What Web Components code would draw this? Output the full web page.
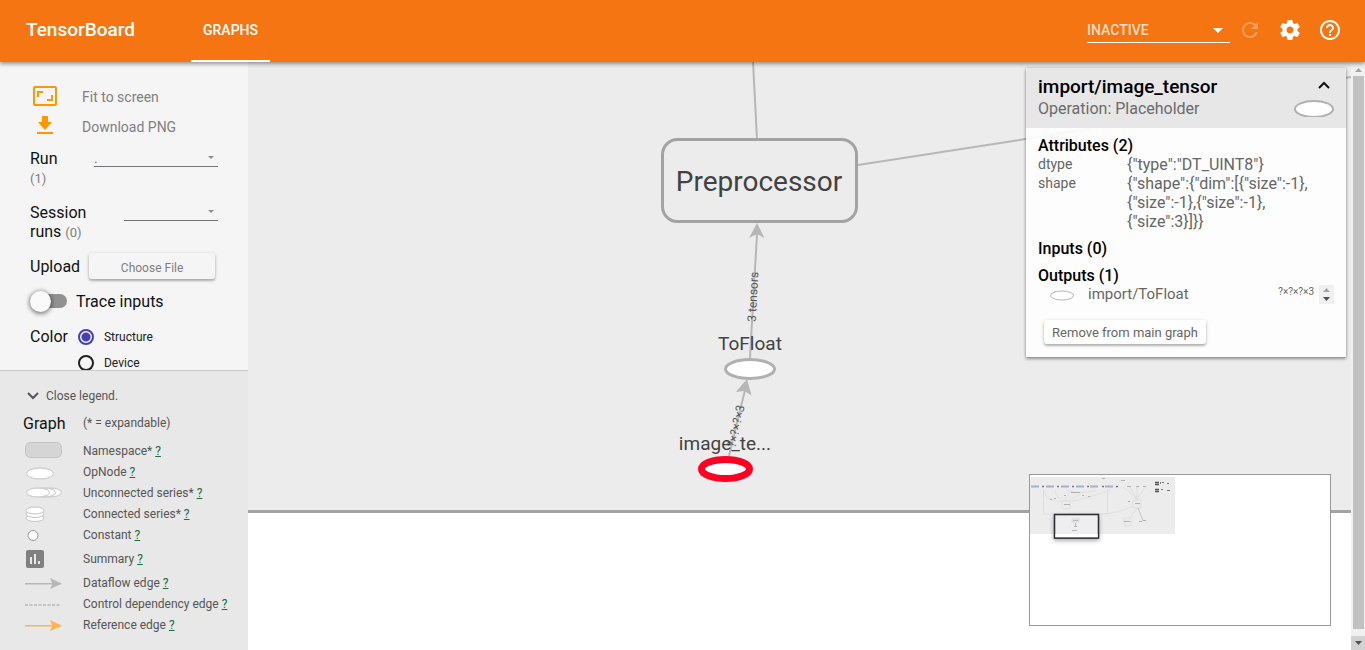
<!DOCTYPE html>
<html lang="en">
<head>
<meta charset="utf-8">
<title>TensorBoard</title>
<style>
  html, body { margin: 0; height: 100%; }
  body { font-family: Roboto, "Noto Sans", sans-serif; font-size: 14px; color: #212121; overflow: hidden; }
</style>
</head>
<body>
<tb-app></tb-app>
<script>
const define = (name, html, setup) => {
  const tpl = document.createElement('template');
  tpl.innerHTML = html;
  customElements.define(name, class extends HTMLElement {
    constructor() {
      super();
      this.attachShadow({ mode: 'open' }).appendChild(tpl.content.cloneNode(true));
    }
    connectedCallback() { if (setup) setup(this, this.shadowRoot); }
  });
};

/* Drop-down with an underline. Attributes: value, label */
define('tb-select', `
<style>
  :host { display: block; position: relative; }
  select { appearance: none; display: block; box-sizing: border-box; width: 100%; height: var(--select-height, 18px);
    margin: 0; padding: 0 20px 0 0; border: 0; border-bottom: 1px solid var(--select-line, #737373); border-radius: 0;
    background: none; color: var(--select-color, #757575); font: inherit; outline: 0; }
  svg { position: absolute; right: var(--select-arrow-right, 4px); top: 50%; width: var(--select-arrow, 6px); height: auto;
    margin-top: -2px; fill: var(--select-arrow-color, #8e8e8e); pointer-events: none; }
</style>
<select><option></option></select>
<svg viewBox="0 0 10 5"><path d="M0 0h10L5 5z"/></svg>
`, (host, root) => {
  root.querySelector('option').textContent = host.getAttribute('value') || '';
  root.querySelector('select').setAttribute('aria-label', host.getAttribute('label') || '');
});

/* Raised button */
define('tb-button', `
<style>
  :host { display: block; }
  button { display: block; box-sizing: border-box; width: 100%; height: 100%; margin: 0; padding: var(--button-pad, 0) 6px 0; border: 0; border-radius: 3px;
    background: var(--button-bg, #f5f5f5); color: var(--button-color, #808080); font: inherit; white-space: nowrap;
    box-shadow: 0 2px 2px rgba(0,0,0,.2), 0 1px 4px rgba(0,0,0,.18); }
</style>
<button type="button"><slot></slot></button>
`);

define('tb-header', `
<style>
  :host { display: flex; align-items: center; height: 62px; flex: none; position: relative; z-index: 3;
    background: #f47512; color: #fff; box-shadow: 0 2px 4px rgba(0,0,0,.4); box-sizing: border-box; padding: 0 23px 2px 26px; }
  h1 { margin: 0; font-size: 19px; line-height: 24px; font-weight: 500; width: 165px; }
  nav { flex: 1; align-self: stretch; display: flex; margin-bottom: -2px; }
  a { box-sizing: border-box; display: flex; align-items: center; padding: 0 12px; border-bottom: 2px solid #fff; color: #fff; text-decoration: none; font-size: 14px; font-weight: 500; }
  tb-select { width: 143px; margin-right: 8px; font-weight: 500; --select-height: 26px; --select-line: #fff; --select-color: rgba(255,255,255,.75);
    --select-arrow: 10px; --select-arrow-color: #fff; --select-arrow-right: 7px; }
  button { border: 0; margin: 0; padding: 0; background: none; width: 24px; height: 24px; margin-left: 16px; }
  button:first-of-type { margin-left: 0; opacity: .3; }
  svg { display: block; width: 24px; height: 24px; fill: #fff; }
</style>
<h1>TensorBoard</h1>
<nav><a href="#graphs">GRAPHS</a></nav>
<tb-select value="INACTIVE" label="Inactive dashboards"></tb-select>
<button type="button" aria-label="Reload" disabled><svg viewBox="0 0 24 24"><path d="M17.65 6.35C16.2 4.9 14.21 4 12 4c-4.42 0-7.99 3.58-7.99 8s3.57 8 7.99 8c3.73 0 6.84-2.55 7.73-6h-2.08c-.82 2.33-3.04 4-5.65 4-3.31 0-6-2.69-6-6s2.69-6 6-6c1.66 0 3.14.69 4.22 1.78L13 11h7V4l-2.35 2.35z"/></svg></button>
<button type="button" aria-label="Settings"><svg viewBox="0 0 24 24"><path d="M19.43 12.98c.04-.32.07-.64.07-.98s-.03-.66-.07-.98l2.11-1.65c.19-.15.24-.42.12-.64l-2-3.46c-.12-.22-.39-.3-.61-.22l-2.49 1c-.52-.4-1.08-.73-1.69-.98l-.38-2.65C14.46 2.18 14.25 2 14 2h-4c-.25 0-.46.18-.49.42l-.38 2.65c-.61.25-1.17.59-1.69.98l-2.49-1c-.23-.09-.49 0-.61.22l-2 3.46c-.13.22-.07.49.12.64l2.11 1.65c-.04.32-.07.65-.07.98s.03.66.07.98l-2.11 1.65c-.19.15-.24.42-.12.64l2 3.46c.12.22.39.3.61.22l2.49-1c.52.4 1.08.73 1.69.98l.38 2.65c.03.24.24.42.49.42h4c.25 0 .46-.18.49-.42l.38-2.65c.61-.25 1.17-.59 1.69-.98l2.49 1c.23.09.49 0 .61-.22l2-3.46c.12-.22.07-.49-.12-.64l-2.11-1.65zM12 15.5c-1.93 0-3.5-1.57-3.5-3.5s1.57-3.5 3.5-3.5 3.5 1.57 3.5 3.5-1.57 3.5-3.5 3.5z"/></svg></button>
<button type="button" aria-label="Help"><svg viewBox="0 0 24 24"><path d="M11 18h2v-2h-2v2zm1-16C6.48 2 2 6.48 2 12s4.48 10 10 10 10-4.48 10-10S17.52 2 12 2zm0 18c-4.41 0-8-3.59-8-8s3.59-8 8-8 8 3.59 8 8-3.59 8-8 8zm0-14c-2.21 0-4 1.79-4 4h2c0-1.1.9-2 2-2s2 .9 2 2c0 2-3 1.75-3 5h2c0-2.25 3-2.5 3-5 0-2.21-1.79-4-4-4z"/></svg></button>
`);

define('tb-controls', `
<style>
  :host { display: block; flex: 1; min-height: 0; overflow: hidden; background: #f5f5f5; padding: 20px 30px 0; }
  .action { display: flex; align-items: center; gap: 22px; height: 30px; width: 100%; border: 0; margin: 0; padding: 0; background: none; font: inherit; color: #808080; text-align: left; }
  .action svg { width: 30px; height: 30px; fill: #ff9800; }
  .title { font-size: 16px; line-height: 19px; color: #111; }
  .title small { font-size: 13px; color: #808080; }
  .row { display: flex; }
  .field { justify-content: space-between; align-items: flex-start; height: 38px; margin: 7px 0 16px; }
  .field .title { width: 58px; }
  .run .title { width: 32px; }
  .run tb-select { width: 124px; }
  tb-select { width: 94px; }
  .upload { align-items: center; gap: 9px; margin-bottom: 10px; margin-top: -4px; }
  .upload tb-button { width: 126px; height: 26px; font-size: 12px; --button-pad: 3px; }
  .trace { align-items: center; gap: 9px; height: 24px; margin-bottom: 14px; }
  .toggle { appearance: none; position: relative; margin: 0; width: 37px; height: 14px; border-radius: 7px; background: linear-gradient(#919191, #919191) 4px 0 no-repeat; }
  .toggle::before { content: ""; position: absolute; left: 0; top: -3px; width: 21px; height: 21px; border-radius: 50%; background: #fafafa; box-shadow: 0 1px 4px 1px rgba(0,0,0,.45); }
  fieldset { display: flex; gap: 10px; margin: 0; padding: 0; border: 0; }
  .options { display: flex; flex-direction: column; }
  .options label { display: flex; align-items: center; gap: 10px; height: 26px; font-size: 12px; }
  .options input { appearance: none; box-sizing: border-box; margin: 0; width: 16px; height: 16px; border: 2px solid #212121; border-radius: 50%; }
  .options input:checked { border-color: #473fb5; background: radial-gradient(circle, #473fb5 4px, transparent 5px); }
  .options { margin-top: -3px; }
  .trace .title, .upload .title { flex: none; }
</style>
<button class="action" type="button"><svg viewBox="0 0 30 30"><path fill-rule="evenodd" d="M5 4h20a2 2 0 0 1 2 2v16a2 2 0 0 1-2 2H5a2 2 0 0 1-2-2V6a2 2 0 0 1 2-2zm0 2v16h20V6zM7 9h6v2H9v4H7zM23 19h-6v-2h4v-4h2z"/></svg>Fit to screen</button>
<button class="action" type="button"><svg viewBox="0 0 30 30"><path d="M12 4h6v6h4l-7 8-7-8h4zM7 20h16v2H7z"/></svg>Download PNG</button>
<div class="row field run"><div class="title">Run <small>(1)</small></div><tb-select value="." label="Run"></tb-select></div>
<div class="row field"><div class="title"><span>Session</span> <span>runs</span> <small>(0)</small></div><tb-select label="Session runs"></tb-select></div>
<div class="row upload"><span class="title">Upload</span><tb-button>Choose File</tb-button></div>
<div class="row trace"><input class="toggle" type="checkbox" role="switch" id="trace"><label class="title" for="trace">Trace inputs</label></div>
<fieldset aria-label="Color">
  <span class="title">Color</span>
  <div class="options">
    <label><input type="radio" name="color" checked>Structure</label>
    <label><input type="radio" name="color">Device</label>
  </div>
</fieldset>
`);

define('tb-legend-item', `
<style>
  :host { display: flex; align-items: center; min-height: 21px; }
  .icon { width: 60px; flex: none; display: flex; }
  a { color: #1b6e35; }
  span { white-space: nowrap; }
</style>
<div class="icon"><slot name="icon"></slot></div><span><slot></slot> <a href="#help">?</a></span>
`);

define('tb-legend', `
<style>
  :host { display: block; flex: none; box-sizing: border-box; background: #e8e8e8; border-top: 1px solid #c9c9c9;
    padding: 13px 0 14px 23px; font-size: 12px; line-height: 21px; color: #555; }
  .close { display: flex; align-items: center; gap: 5px; border: 0; padding: 0 0 0 2px; margin: 0 0 6px; height: 24px; background: none; font: inherit; color: inherit; }
  .close svg { width: 16px; height: 16px; }
  h2 { margin: 0; width: 60px; font-size: 16px; font-weight: 400; color: #111; }
  .head { display: flex; height: 18px; align-items: center; margin-bottom: 9px; }
  .tall { min-height: 27px; }
  .item svg { display: block; width: 42px; height: 20px; }
</style>
<button class="close" type="button"><svg viewBox="0 0 16 16"><path d="M3 5l5 5 5-5" fill="none" stroke="#555" stroke-width="2"/></svg>Close legend.</button>
<div class="head"><h2>Graph</h2><span>(* = expandable)</span></div>
<tb-legend-item class="item"><svg slot="icon" viewBox="0 0 42 20" fill="#d5d5d5" stroke="#c2c2c2"><rect x="2.5" y="0.500" width="36" height="15" rx="5"/></svg>Namespace*</tb-legend-item>
<tb-legend-item class="item"><svg slot="icon" viewBox="0 0 42 20" fill="#fff" stroke="#c4c4c4"><ellipse cx="17" cy="10.500" rx="13.500" ry="5.500"/></svg>OpNode</tb-legend-item>
<tb-legend-item class="item"><svg slot="icon" viewBox="0 0 42 20" fill="#fff" stroke="#c4c4c4"><ellipse cx="27" cy="8.500" rx="11.500" ry="4.500"/><ellipse cx="21" cy="8.500" rx="11.500" ry="4.500"/><ellipse cx="15" cy="8.500" rx="11.500" ry="4.500"/></svg>Unconnected series*</tb-legend-item>
<tb-legend-item class="item"><svg slot="icon" viewBox="0 0 42 20" fill="#fff" stroke="#c4c4c4"><ellipse cx="12" cy="13" rx="9" ry="3.500"/><ellipse cx="12" cy="9" rx="9" ry="3.500"/><ellipse cx="12" cy="5.500" rx="9" ry="3.500"/></svg>Connected series*</tb-legend-item>
<tb-legend-item class="item"><svg slot="icon" viewBox="0 0 42 20" fill="#fff" stroke="#999"><circle cx="10" cy="9.500" r="5"/></svg>Constant</tb-legend-item>
<tb-legend-item class="item tall"><svg slot="icon" viewBox="0 0 42 20"><path d="M5 0h14a2 2 0 0 1 2 2v14a2 2 0 0 1-2 2H5a2 2 0 0 1-2-2V2a2 2 0 0 1 2-2z" fill="#808080"/><path d="M7 7h2v7H7zM11 4h2v10h-2zM15 11h2v3h-2z" fill="#e8e8e8"/></svg>Summary</tb-legend-item>
<tb-legend-item class="item"><svg slot="icon" viewBox="0 0 42 20" fill="#b7b7b7"><path d="M2 9h28v1.500H2zM27 4l12 5.700-12 5.300 2.500-5.300z"/></svg>Dataflow edge</tb-legend-item>
<tb-legend-item class="item"><svg slot="icon" viewBox="0 0 42 20"><path d="M2 10h36" stroke="#b7b7b7" stroke-width="1.500" stroke-dasharray="3 1.500"/></svg>Control dependency edge</tb-legend-item>
<tb-legend-item class="item"><svg slot="icon" viewBox="0 0 42 20" fill="#ffb34a"><path d="M2 9h28v1.500H2zM27 4l12 5.700-12 5.300 2.500-5.300z"/></svg>Reference edge</tb-legend-item>
`);

define('tb-node-info', `
<style>
  :host { display: block; box-sizing: border-box; width: 320px; background: rgba(255,255,255,.9); box-shadow: 0 2px 3px rgba(0,0,0,.35), 0 0 3px rgba(0,0,0,.2); color: #666; font-size: 16px; line-height: 19px; padding-bottom: 13px; }
  header { display: flex; justify-content: space-between; padding: 8px 12px; background: #e7e7e7; height: 44px; }
  h2 { margin: 0; font-size: 19px; line-height: 22px; font-weight: 500; color: #000; }
  header p { margin: 0; line-height: 22px; color: #6b6b6b; }
  .side { display: flex; flex-direction: column; align-items: flex-end; }
  .side button { border: 0; padding: 0; margin: 0 2px 5px; background: none; width: 16px; height: 18px; }
  svg { display: block; }
  .body { padding: 8px 12px 0; }
  h3 { margin: 0 0 8px; font-size: 16px; line-height: 19px; font-weight: 500; color: #000; }
  .tight { margin: 0; }
  table { border-spacing: 0; margin-bottom: 8px; }
  th, td { padding: 0; vertical-align: top; text-align: left; font-weight: 400; }
  th { width: 89px; font-size: 14px; }
  .out { display: flex; padding-left: 12px; height: 19px; margin-bottom: 16px; }
  .out svg { margin: 5px 13px 0 0; }
  .out a { flex: 1; font-size: 15px; color: inherit; text-decoration: none; }
  .out small { font-size: 10px; line-height: 14px; margin-right: 5px; }
  .out .spin { margin: 0; }
  tb-button { width: 162px; height: 24px; margin-left: 6px; font-size: 13px; --button-bg: #fff; --button-color: #666; }
</style>
<header>
  <div><h2>import/image_tensor</h2><p>Operation: Placeholder</p></div>
  <div class="side"><button type="button" aria-label="Collapse"><svg width="16" height="18" viewBox="0 0 16 18"><path d="M3 12l5-5 5 5" fill="none" stroke="#111" stroke-width="2"/></svg></button>
  <svg width="40" height="18" viewBox="0 0 40 18"><ellipse cx="20" cy="10" rx="19" ry="8" fill="#fff" stroke="#b0b0b0" stroke-width="2"/></svg></div>
</header>
<div class="body">
  <h3 class="tight">Attributes (2)</h3>
  <table>
    <tr><th scope="row">dtype</th><td>{"type":"DT_UINT8"}</td></tr>
    <tr><th scope="row">shape</th><td>{"shape":{"dim":[{"size":-1},<br>{"size":-1},{"size":-1},<br>{"size":3}]}}</td></tr>
  </table>
  <h3>Inputs (0)</h3>
  <h3 class="tight">Outputs (1)</h3>
  <div class="out"><svg width="25" height="11" viewBox="0 0 25 11"><ellipse cx="12" cy="5.500" rx="11.500" ry="4.500" fill="#fff" stroke="#b5b5b5"/></svg><a href="#ToFloat">import/ToFloat</a><small>?×?×?×3</small><svg class="spin" width="15" height="19" viewBox="0 0 15 19"><path d="M0 0h15v19H0z" fill="#f0f0f0"/><path d="M4 7h7L7.500 3z" fill="#a3a3a3"/><path d="M4 12h7l-3.500 4z" fill="#505050"/></svg></div>
  <tb-button>Remove from main graph</tb-button>
</div>
`);

define('tb-minimap', `
<style>
  :host { display: block; box-sizing: border-box; width: 302px; height: 152px; background: #fff; border: 1px solid #999; }
  svg { display: block; }
</style>
<svg width="300" height="150" viewBox="0 0 300 150" fill="none">
  <defs><filter id="s" x="-20%" y="-20%" width="140%" height="150%"><feDropShadow dx="0" dy="2" stdDeviation="2" flood-opacity=".35"/></filter></defs>
  <path d="M0 2h145v57H0z" fill="#ececec"/>
  <g stroke="#dadada" stroke-width=".7">
    <path d="M13.500 15v24h64v-24M36 15c8 3 18 4 30 0"/>
    <rect x="32" y="26" width="8" height="8" rx="1"/><rect x="103" y="25" width="8" height="8" rx="1"/><rect x="94" y="43" width="7" height="8" rx="1"/>
    <path d="M14 15c1 7 3 9 18 12M25 15c1 6 4 9 8 11M44 15c-6 4-8 7-9 11M55 15c-6 6-12 8-17 11M80 15c-14 6-29 9-41 12M107 25C104 20 95 14 93 12M107 25l-7-13M107 25v-13M107 25c2-6 7-10 8-13M103 31C90 37 80 39 65 39H40M107 33l-7 10M108 33l5 12"/>
  </g>
  <path d="M108 33l5 13" stroke="#c8c8c8"/>
  <path d="M1 11.500h8M16 11.500h8M31 11.500h8M46 11.500h8M60 11.500h8M75 11.500h8" stroke="#a5b0cc" stroke-width="2"/>
  <path d="M12 11.500h2M27 11.500h2M42 11.500h2M57 11.500h2M72 11.500h2M86 11.500h2" stroke="#777" stroke-width="1.500"/>
  <path d="M72 3.500h3M91 5.500h4M97 11.500h4M106 11.500h3M113 11.500h3M98 26.500h2M34 29.500h6M105 28.500h5M94 46.500h6M109 46.500h3M113 45.500h3M20 24.500h2M24 23.500h2M34 20.500h2M52 20.500h2M58 21.500h2M41 17.500h9" stroke="#999" stroke-width=".7"/>
  <path d="M125 7.500h4M125 9.500h4M130 8h1M125 14.500h4M125 16.500h4" stroke="#555" stroke-width="1.500"/>
  <path d="M132 7.500h2M137 8.500h2M131 14.500h2M137 15.500h3" stroke="#777"/>
  <rect x="24.500" y="39.500" width="44" height="23.500" fill="#eee" stroke="#2b2f33" stroke-width="1.300" filter="url(#s)"/>
  <path d="M24.500 59h44v4h-44z" fill="#fff"/>
  <rect x="42" y="44" width="7" height="3" stroke="#ccc" stroke-width=".7"/>
  <path d="M43 45.500h5M44 51.500h3M42 55.500h5M45.500 48v3" stroke="#aaa" stroke-width=".8"/>
  <rect x="24.500" y="39.500" width="44" height="23.500" stroke="#2b2f33" stroke-width="1.300"/>
</svg>
`);

define('tb-graph', `
<style>
  :host { display: block; flex: 1; min-width: 0; position: relative; overflow: hidden; background: #fff; }
  .scene { display: block; width: 100%; height: 100%; }
  text { fill: #424242; text-anchor: middle; }
  .edge { fill: none; stroke: #b7b7b7; stroke-width: 2; }
  .edge-label { font-size: 12px; fill: #555; }
  tb-node-info { position: absolute; top: 6px; right: 5px; }
  tb-minimap { position: absolute; right: 20px; bottom: 24px; }
</style>
<svg class="scene">
  <rect width="100%" height="448" fill="#ececec"/>
  <rect y="448" width="100%" height="3" fill="#a3a3a3"/>
  <path class="edge" d="M505 0l4 77M610 103l232-36M1097 16l6-1"/>
  <path class="edge" d="M502 296L509 172" stroke-width="3"/>
  <path class="edge" d="M481 394l16-66"/>
  <path d="M509 161l7.500 15-7.500-4-8 4zM499 317l4.500 16.500-7-4.500-8.500 1z" fill="#b7b7b7"/>
  <rect x="414.500" y="77.500" width="194" height="82" rx="15" fill="#ececec" stroke="#a3a3a3" stroke-width="3"/>
  <text x="511" y="129" font-size="28">Preprocessor</text>
  <text class="edge-label" transform="translate(509 235) rotate(-87)">3 tensors</text>
  <text x="502" y="288" font-size="19">ToFloat</text>
  <ellipse cx="502" cy="307" rx="24.500" ry="9.500" fill="#fff" stroke="#b0b0b0" stroke-width="3"/>
  <text class="edge-label" transform="translate(492 365) rotate(-77)">?×?×?×3</text>
  <text x="477" y="388" font-size="19">image_te...</text>
  <ellipse cx="477.500" cy="407" rx="24" ry="9.500" fill="#fff" stroke="#ff0022" stroke-width="7"/>
</svg>
<tb-node-info></tb-node-info>
<tb-minimap></tb-minimap>
`);

define('tb-scrollbar', `
<style>
  :host { display: flex; flex-direction: column; flex: none; width: 14px; background: #f1f1f1; }
  svg { display: block; height: 14px; width: 14px; }
  .thumb { flex: 1; margin: 0 1px 7px 2px; background: #c1c1c1; }
  .down { background: #d2d2d2; }
</style>
<svg viewBox="0 0 14 14"><path d="M4 10h7L7.500 6z" fill="#a3a3a3"/></svg>
<div class="thumb"></div>
<svg class="down" viewBox="0 0 14 14"><path d="M4 5h7L7.500 9z" fill="#505050"/></svg>
`);

define('tb-app', `
<style>
  :host { display: flex; flex-direction: column; height: 100vh; }
  main { display: flex; flex: 1; min-height: 0; }
  aside { display: flex; flex-direction: column; width: 248px; flex: none; }
</style>
<tb-header></tb-header>
<main>
  <aside><tb-controls></tb-controls><tb-legend></tb-legend></aside>
  <tb-graph></tb-graph>
  <tb-scrollbar></tb-scrollbar>
</main>
`);
</script>
</body>
</html>
